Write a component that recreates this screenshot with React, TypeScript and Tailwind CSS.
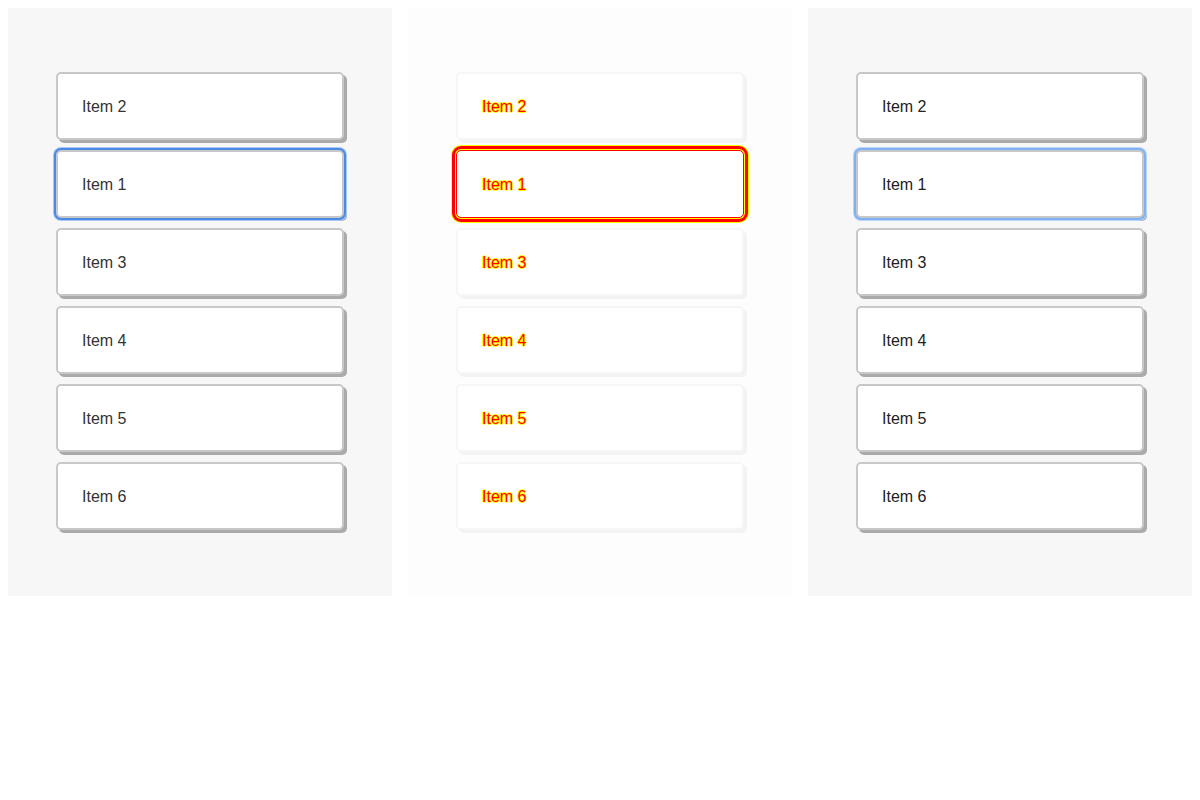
import * as React from 'react'

const items = ['Item 2', 'Item 1', 'Item 3', 'Item 4', 'Item 5', 'Item 6']

type Variant = 'expected' | 'diff' | 'actual'

function Card({ label, selected, variant }: { label: string; selected: boolean; variant: Variant }) {
  if (variant === 'diff') {
    return (
      <div
        className={
          selected
            ? 'flex h-[68px] items-center rounded-[5px] border border-[#ff0000] bg-white pt-[2px] pl-[25px] shadow-[0_0_0_1px_#ffff00,0_0_0_4px_#ff0000,0_0_0_5px_#ffff00]'
            : 'flex h-[68px] items-center rounded-[5px] border-2 border-[#f6f6f6] bg-white pt-[2px] pl-[24px] shadow-[3px_3px_0_#f3f3f3]'
        }
      >
        <span className="text-[16px] text-[#ff0000] [text-shadow:1px_0_0_#ffff00,-1px_0_0_#ffff00,0_1px_0_#ffff00,0_-1px_0_#ffff00]">
          {label}
        </span>
      </div>
    )
  }

  const ring =
    variant === 'expected'
      ? 'shadow-[0_0_0_2px_#4a8ae6,0_0_0_3px_#a9c9f5,3px_3px_0_#aaaaaa]'
      : 'shadow-[0_0_0_2px_#7fb0f2,0_0_0_3px_#b8d4f8,3px_3px_0_#aaaaaa]'

  return (
    <div
      className={
        'flex h-[68px] items-center rounded-[5px] border-2 border-[#c8c8c8] bg-white pt-[2px] pl-[24px] ' +
        (selected ? ring : 'shadow-[3px_3px_0_#aaaaaa]')
      }
    >
      <span className={variant === 'expected' ? 'text-[16px] text-[#333333]' : 'text-[16px] text-[#222222]'}>
        {label}
      </span>
    </div>
  )
}

function Panel({ variant }: { variant: Variant }) {
  return (
    <div
      className={
        'flex h-[588px] w-[384px] flex-col gap-[10px] px-[48px] pt-[64px] ' +
        (variant === 'diff' ? 'bg-[#fdfdfd]' : 'bg-[#f7f7f7]')
      }
    >
      {items.map((label) => (
        <Card key={label} label={label} selected={label === 'Item 1'} variant={variant} />
      ))}
    </div>
  )
}

export default function App() {
  return (
    <div className="flex min-h-[800px] gap-4 bg-white p-2 font-['Liberation_Sans',Arial,sans-serif]">
      <Panel variant="expected" />
      <Panel variant="diff" />
      <Panel variant="actual" />
    </div>
  )
}
